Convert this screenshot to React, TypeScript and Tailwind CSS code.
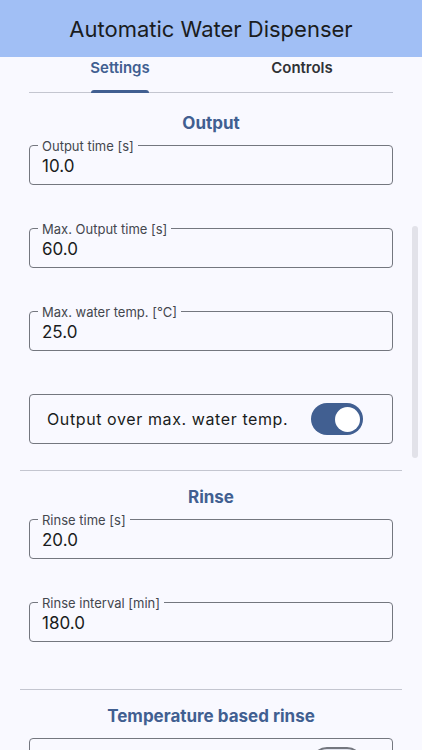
import * as React from "react";

const FONT = { fontFamily: "Inter, 'Noto Sans', sans-serif" };

function Field({ label, value }: { label: string; value: string }) {
  return (
    <div className="relative h-[40px] rounded-[4px] border border-[#74777f] pl-[12px] pt-[8px]">
      <span className="absolute -top-[9px] left-[8px] bg-[#f9f9ff] px-[4px] text-[13px] leading-[18px] text-[#44474e]">
        {label}
      </span>
      <div className="text-[17px] leading-[24px] text-[#1a1c20]">{value}</div>
    </div>
  );
}

function SwitchRow({ label, on }: { label?: string; on: boolean }) {
  return (
    <div className="flex h-[50px] items-center justify-between rounded-[4px] border border-[#74777f] pl-[17px] pr-[29px]">
      <span className="text-[16px] tracking-[0.6px] text-[#1a1c20]">{label}</span>
      {on ? (
        <div className="flex h-[32px] w-[52px] items-center justify-end rounded-full bg-[#415f91] pr-[3px]">
          <div className="h-[25px] w-[25px] rounded-full bg-white" />
        </div>
      ) : (
        <div className="flex h-[32px] w-[52px] items-center rounded-full border-2 border-[#74777f] bg-[#e0e2ec] pl-[6px]">
          <div className="h-[16px] w-[16px] rounded-full bg-[#74777f]" />
        </div>
      )}
    </div>
  );
}

function Heading({ children }: { children: React.ReactNode }) {
  return (
    <h2 className="text-center text-[17px] font-bold leading-[24px] text-[#415f91]">{children}</h2>
  );
}

export default function App() {
  const [tab, setTab] = React.useState<"settings" | "controls">("settings");

  return (
    <div className="relative h-[750px] w-[422px] overflow-hidden bg-[#f9f9ff]" style={FONT}>
      <header className="flex h-[57px] items-center justify-center bg-[#a1bff5]">
        <h1 className="text-[22px] leading-[28px] text-[#1a1c20]">Automatic Water Dispenser</h1>
      </header>

      <div className="mx-[29px] flex h-[36px] border-b border-[#c4c6d0]">
        {(["settings", "controls"] as const).map((t) => (
          <button
            key={t}
            type="button"
            onClick={() => setTab(t)}
            className="flex flex-1 flex-col items-center justify-between"
          >
            <span
              className={`text-[15px] font-semibold leading-[22px] ${
                tab === t ? "text-[#415f91]" : "text-[#303236]"
              }`}
            >
              {t === "settings" ? "Settings" : "Controls"}
            </span>
            {tab === t ? (
              <span className="-mb-px h-[3px] w-[58px] rounded-t-[3px] bg-[#415f91]" />
            ) : null}
          </button>
        ))}
      </div>

      <div className="pt-[18px]">
        <Heading>Output</Heading>
        <div className="mx-[29px] mt-[10px] flex flex-col gap-[43px]">
          <Field label="Output time [s]" value="10.0" />
          <Field label="Max. Output time [s]" value="60.0" />
          <Field label="Max. water temp. [°C]" value="25.0" />
          <SwitchRow label="Output over max. water temp." on />
        </div>

        <div className="mx-[20px] mb-[14px] mt-[26px] h-px bg-[#c4c6d0]" />

        <Heading>Rinse</Heading>
        <div className="mx-[29px] mt-[10px] flex flex-col gap-[43px]">
          <Field label="Rinse time [s]" value="20.0" />
          <Field label="Rinse interval [min]" value="180.0" />
        </div>

        <div className="mx-[20px] mb-[14px] mt-[47px] h-px bg-[#c4c6d0]" />

        <Heading>Temperature based rinse</Heading>
        <div className="mx-[29px] mt-[10px] flex flex-col gap-[43px]">
          {/* row continues below the fold; its label is not in view */}
          <SwitchRow on={false} />
        </div>
      </div>

      <div className="absolute right-[4px] top-[226px] h-[232px] w-[6px] rounded-full bg-[#e2e2e9]" />
    </div>
  );
}
